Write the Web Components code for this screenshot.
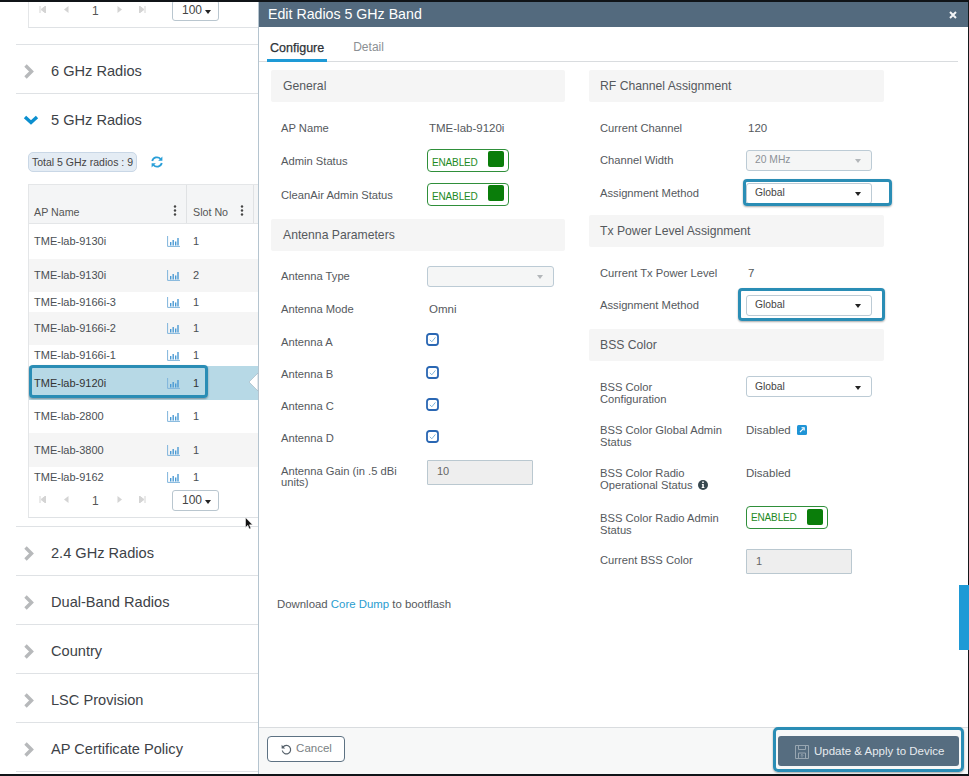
<!DOCTYPE html>
<html lang="en"><head><meta charset="utf-8"><title>Edit Radios 5 GHz Band</title>
<style>
html,body{margin:0;padding:0;height:776px;overflow:hidden;background:#fff}
body{font:12px/1.15 "Liberation Sans",Arial,sans-serif;color:#4a4f54}
</style></head><body>
<x-app>
  <x-sidebar slot="side">
    <x-table-card top><x-pager></x-pager></x-table-card>
    <x-acc-row line first>6 GHz Radios</x-acc-row>
    <x-acc-row open>5 GHz Radios</x-acc-row>
    <x-total>Total 5 GHz radios : 9</x-total>
    <x-table-card>
      <x-thead></x-thead>
      <x-row h="35" slotno="1">TME-lab-9130i</x-row>
      <x-row h="33" slotno="2" alt>TME-lab-9130i</x-row>
      <x-row h="20" slotno="1">TME-lab-9166i-3</x-row>
      <x-row h="33" slotno="1" alt>TME-lab-9166i-2</x-row>
      <x-row h="21" slotno="1">TME-lab-9166i-1</x-row>
      <x-row h="34" slotno="1" selected>TME-lab-9120i</x-row>
      <x-row h="33" slotno="1">TME-lab-2800</x-row>
      <x-row h="34" slotno="1" alt>TME-lab-3800</x-row>
      <x-row h="21" slotno="1">TME-lab-9162</x-row>
      <x-pager></x-pager>
    </x-table-card>
    <x-acc-row line first>2.4 GHz Radios</x-acc-row>
    <x-acc-row line>Dual-Band Radios</x-acc-row>
    <x-acc-row line>Country</x-acc-row>
    <x-acc-row line>LSC Provision</x-acc-row>
    <x-acc-row line>AP Certificate Policy</x-acc-row>
  </x-sidebar>
  <x-panel slot="main" heading="Edit Radios 5 GHz Band">
    <x-col slot="c1">
      <x-section>General</x-section>
      <x-field h="32" mt="10">AP Name<x-val slot="value" pad>TME-lab-9120i</x-val></x-field>
      <x-field h="33">Admin Status<x-toggle slot="value"></x-toggle></x-field>
      <x-field h="35">CleanAir Admin Status<x-toggle slot="value"></x-toggle></x-field>
      <x-section mt="7">Antenna Parameters</x-section>
      <x-field h="32" mt="9">Antenna Type<x-select slot="value" disabled w="127"></x-select></x-field>
      <x-field h="32" mt="1">Antenna Mode<x-val slot="value" pad>Omni</x-val></x-field>
      <x-field h="33">Antenna A<x-check slot="value"></x-check></x-field>
      <x-field h="32">Antenna B<x-check slot="value"></x-check></x-field>
      <x-field h="32">Antenna C<x-check slot="value"></x-check></x-field>
      <x-field h="32">Antenna D<x-check slot="value"></x-check></x-field>
      <x-field h="36" lt="10">Antenna Gain (in .5 dBi<br>units)<x-input slot="value" w="106">10</x-input></x-field>
      <x-download>Download <a>Core Dump</a> to bootflash</x-download>
    </x-col>
    <x-col slot="c2" pad="11">
      <x-section>RF Channel Assignment</x-section>
      <x-field h="32" mt="10">Current Channel<x-val slot="value" pad>120</x-val></x-field>
      <x-field h="32">Channel Width<x-select slot="value" disabled>20 MHz</x-select></x-field>
      <x-field h="34">Assignment Method<x-ring slot="value" style="--t:-4px;--r:-20px;--b:-2px;--l:-3px"><x-select>Global</x-select></x-ring></x-field>
      <x-section mt="5">Tx Power Level Assignment</x-section>
      <x-field h="32" mt="10">Current Tx Power Level<x-val slot="value" pad>7</x-val></x-field>
      <x-field h="32">Assignment Method<x-ring slot="value" style="--t:-7px;--r:-13px;--b:-5px;--l:-8px"><x-select>Global</x-select></x-ring></x-field>
      <x-section mt="8">BSS Color</x-section>
      <x-field h="40" mt="11" top="4" lt="6">BSS Color<br>Configuration<x-select slot="value">Global</x-select></x-field>
      <x-field h="46" top="12" lt="1">BSS Color Global Admin<br>Status<x-val slot="value">Disabled <x-ico-link></x-ico-link></x-val></x-field>
      <x-field h="43" top="9" lt="1">BSS Color Radio<br>Operational Status <x-ico-info></x-ico-info><x-val slot="value">Disabled</x-val></x-field>
      <x-field h="44" top="6" lt="6">BSS Color Radio Admin<br>Status<x-toggle slot="value" mid></x-toggle></x-field>
      <x-field h="33" lt="-2">Current BSS Color<x-input slot="value" w="106">1</x-input></x-field>
    </x-col>
  </x-panel>
</x-app>
<script>
function def(name, css, html, setup){
  customElements.define(name, class extends HTMLElement{
    connectedCallback(){
      if(this.shadowRoot) return;
      const r=this.attachShadow({mode:'open'});
      r.innerHTML='<style>'+css+'</style>'+(typeof html==='function'?html(this):html);
      if(setup) setup(this,r);
    }
  });
}
const A=(el,n)=>el.getAttribute(n);
def('x-app',`:host{display:grid;grid-template-columns:258px 711px;height:776px;box-sizing:border-box;border-top:2px solid #101418;border-bottom:2px solid #101418;position:relative}
 .thumb{position:absolute;left:959px;top:583px;width:10px;height:65px;background:#1e9ad6}
 .cursor{position:absolute;left:245px;top:515px}`,
 `<slot name="side"></slot><slot name="main"></slot><div class="thumb"></div>
  <svg class="cursor" width="8" height="13" viewBox="0 0 8 13"><path d="M.5.5v10l2.3-2.2 1.5 3.6 1.6-.7-1.5-3.4h3.1z" fill="#111" stroke="#fff" stroke-width=".5"/></svg>`);
def('x-sidebar',`:host{display:block;padding-left:16px;overflow:hidden;height:772px}`,`<slot></slot>`);
def('x-table-card',`:host{display:block;margin-left:12px;border-left:1px solid #e4e6e8;border-bottom:1px solid #dfe2e5;box-sizing:border-box}
 :host([top]){margin-top:-4px;margin-bottom:16px}`,`<slot></slot>`);
def('x-pager',`:host{display:flex;align-items:center;height:29px;box-sizing:border-box;padding-bottom:2px;position:relative;background:#fff;color:#555;font-size:12px}
 svg{position:absolute;top:8px}
 .n{position:absolute;left:63px}
 .s{position:absolute;left:143px;top:2px;width:47px;height:21px;box-sizing:border-box;border:1px solid #b9c6cf;border-radius:3px;display:flex;align-items:center;padding-left:9px;gap:3px;background:#fff;color:#444}
 i{width:0;height:0;border:3.5px solid transparent;border-top:4.5px solid #222;border-bottom:0;margin-top:2px}`,
 `<svg style="left:10px" width="7" height="7" viewBox="0 0 7 7"><path d="M1 0v7M6.5 0v7L2 3.5z" stroke="#d4d4d4" fill="#d4d4d4"/></svg>
  <svg style="left:34px" width="6" height="7" viewBox="0 0 6 7"><path d="M5.5 0v7L1 3.5z" fill="#d4d4d4"/></svg>
  <span class="n">1</span>
  <svg style="left:88px" width="6" height="7" viewBox="0 0 6 7"><path d="M.5 0v7L5 3.5z" fill="#d4d4d4"/></svg>
  <svg style="left:110px" width="7" height="7" viewBox="0 0 7 7"><path d="M6 0v7M.5 0v7L5 3.5z" stroke="#d4d4d4" fill="#d4d4d4"/></svg>
  <div class="s">100 <i></i></div>`);
def('x-acc-row',`:host{display:flex;align-items:center;height:49px;box-sizing:border-box;font-size:14.6px;color:#3d4247;padding:4px 0 0 7px}
 :host([line]){border-bottom:1.5px solid #dfe2e5}
 :host([first]){margin-top:8px;border-top:1.5px solid #dfe2e5;height:50px}
 :host([open]){height:48px}
 .c{width:28px;display:flex}`,
 el=>`<span class="c">${el.hasAttribute('open')
   ?'<svg width="16" height="10" viewBox="0 0 16 10"><path d="M2 2l6 5.5L14 2" fill="none" stroke="#0b8fcf" stroke-width="3.4"/></svg>'
   :'<svg width="11" height="15" viewBox="0 0 11 15"><path d="M2.5 1.5l6 6-6 6" fill="none" stroke="#b7b9bb" stroke-width="3.4"/></svg>'}</span><slot></slot>`);
def('x-total',`:host{display:flex;align-items:center;margin:10px 0 12px 12px;gap:14px}
 b{font-weight:400;display:block;height:20px;line-height:18px;box-sizing:border-box;width:109px;text-align:center;background:#e4ecf4;border:1px solid #c9d7e6;border-radius:5px;font-size:10.5px;color:#444}
 svg{display:block}`,
 `<b><slot></slot></b><svg width="12" height="12" viewBox="0 0 12 12"><path d="M1.2 5A4.9 4.9 0 0 1 9.6 3" fill="none" stroke="#2a9fd8" stroke-width="1.8"/><path d="M11.4 .5v4.2H7.2z" fill="#2a9fd8"/><path d="M10.8 7A4.9 4.9 0 0 1 2.4 9" fill="none" stroke="#2a9fd8" stroke-width="1.8"/><path d="M.6 11.5V7.3h4.2z" fill="#2a9fd8"/></svg>`);
const keb=`<svg width="4" height="11" viewBox="0 0 4 11"><g fill="#444"><circle cx="2" cy="1.5" r="1.2"/><circle cx="2" cy="5.5" r="1.2"/><circle cx="2" cy="9.5" r="1.2"/></g></svg>`;
def('x-thead',`:host{display:flex;height:40px;background:#f4f5f6;border-top:1px solid #e4e6e8;border-bottom:1px solid #e4e6e8;box-sizing:border-box;color:#555;font-size:10.7px}
 div{display:flex;align-items:flex-end;justify-content:space-between;padding:0 0 6px 5px;box-sizing:border-box;border-right:1px solid #e0e2e4}
 span{margin-bottom:-1px}
 .a{width:158px;padding-right:9px}.b{width:67px;padding-left:6px;padding-right:9px}
 svg{margin-bottom:1px}`,`<div class="a"><span>AP Name</span>${keb}</div><div class="b"><span>Slot No</span>${keb}</div>`);
def('x-row',`:host{display:flex;align-items:center;position:relative;background:#fff;font-size:11px;color:#4a4f54;padding-left:5px;box-sizing:border-box}
 :host([alt]){background:#f5f5f5}
 :host([selected]){background:#b7d9e6;color:#333}
 :host([selected])::after{content:"";position:absolute;left:0;top:-1px;width:179px;height:33px;box-sizing:border-box;border:3px solid #2a8db5;border-radius:4px;box-shadow:0 1px 2px #0005}
 .n{width:133px}.v{margin-left:13px}
 svg{display:block}
 .notch{position:absolute;right:0;top:7px}`,
 el=>`<span class="n"><slot></slot></span><svg width="13" height="11" viewBox="0 0 13 11"><path d="M.6 0v10.4H13" fill="none" stroke="#7fb4dc" stroke-width="1"/><path d="M3 6h1.4v3.5H3zM5.5 4h1.4v5.5H5.5zM8 5.5h1.4v4H8zM10.3 2h1.4v7.5h-1.4z" fill="#4a9ad4"/></svg><span class="v">${A(el,'slotno')}</span>${el.hasAttribute('selected')?'<svg class="notch" width="10" height="18" viewBox="0 0 10 18"><path d="M10 0L1 9l9 9z" fill="#fff" stroke="#9fb3c0" stroke-width=".6"/></svg>':''}`,
 el=>{el.style.height=A(el,'h')+'px'});
def('x-panel',`:host{display:flex;flex-direction:column;height:772px;border-left:1px solid #b5c4cf;border-right:1px solid #14181c;box-sizing:border-box;background:#fff}
 header{height:25px;flex:none;background:#536a7e;color:#fff;font-size:14.2px;display:flex;align-items:center;justify-content:space-between;padding:0 11px 0 9px}
 header svg{display:block}
 nav{height:35px;flex:none;box-sizing:border-box;border-bottom:1px solid #d9dcdf;margin-right:10px;display:flex;align-items:flex-end;padding-left:8px;gap:26px;font-size:12.5px}
 nav span{display:block;height:27px;box-sizing:border-box;padding-top:6px}
 nav .on{color:#2d3338;border-bottom:3px solid #1e9ad6;margin-bottom:-1px;padding:6px 3px 0;-webkit-text-stroke:.25px #2d3338}
 nav .off{color:#8b9094;font-size:12px;padding-top:7px}
 main{flex:1;display:flex;gap:24px;padding:8px 0 0 12px;min-height:0}
 footer{height:47px;flex:none;box-sizing:border-box;border-top:1px solid #d9dcdf;background:#f7f8f8;display:flex;justify-content:space-between;align-items:flex-start;padding:8px 9px 0 8px}
 button{font:inherit;font-size:11.5px}
 .cancel{width:78px;height:26px;background:#fff;border:1px solid #5d7283;border-radius:4px;color:#7a7f84;display:flex;align-items:center;justify-content:center;gap:4px;padding:0 0 0 1px}
 .ring{position:relative;display:block}
 .ring::after{content:"";position:absolute;inset:-9px -5px -6px -5px;border:3px solid #2a8db5;border-radius:5px;box-shadow:0 1px 2px #0005}
 .upd{width:181px;height:30px;background:#566d80;border:0;border-radius:3px;color:#e6ebef;display:flex;align-items:center;gap:5px;padding:1px 0 0 17px}`,
 el=>`<header><span>${A(el,'heading')}</span><svg width="8" height="8" viewBox="0 0 8 8"><path d="M1 1l6 6M7 1L1 7" stroke="#f2f4f6" stroke-width="2"/></svg></header>
 <nav><span class="on">Configure</span><span class="off">Detail</span></nav>
 <main><slot name="c1"></slot><slot name="c2"></slot></main>
 <footer><button class="cancel"><svg width="11" height="11" viewBox="0 0 11 11"><path d="M2 3.2A4.2 4.2 0 1 1 1.3 6.5" fill="none" stroke="#55606a" stroke-width="1.2"/><path d="M.6 .8v3.6h3.6z" fill="#55606a"/></svg>Cancel</button>
 <span class="ring"><button class="upd"><svg width="14" height="14" viewBox="0 0 14 14" fill="none" stroke="#98a6b1"><path d="M.5.5h13v13H.5zM3.5.5v4h7v-4M3.5 13.5V8h7v5.5"/><path d="M7 12.5V9.5M5.7 10.6 7 9.3l1.3 1.3" stroke-width=".8"/></svg>Update &amp; Apply to Device</button></span></footer>`);
def('x-col',`:host{display:block;width:294px;flex:none;box-sizing:border-box;--pad:10px;--sp:12px}
 :host([pad]){--pad:11px;--sp:11px;width:295px}`,`<slot></slot>`);
def('x-section',`:host{display:flex;align-items:center;height:32px;box-sizing:border-box;background:#f5f5f5;border-radius:2px;padding-left:var(--sp);font-size:12.2px;color:#55595d}`,`<slot></slot>`,
 el=>{if(A(el,'mt'))el.style.marginTop=A(el,'mt')+'px'});
def('x-field',`:host{display:flex;align-items:center;box-sizing:border-box;padding-left:var(--pad);color:#55595d;line-height:11.5px}
 :host([top]){align-items:flex-start}
 .l{width:146px;flex:none;font-size:11.2px;margin-top:var(--lt,2px)}`,`<div class="l"><slot></slot></div><slot name="value"></slot>`,
 el=>{el.style.height=A(el,'h')+'px'; if(A(el,'mt'))el.style.marginTop=A(el,'mt')+'px'; if(A(el,'top'))el.style.paddingTop=A(el,'top')+'px'; if(A(el,'lt')!==null)el.style.setProperty('--lt',A(el,'lt')+'px');});
def('x-val',`:host{display:block;font-size:11.5px;color:#55595d;white-space:nowrap;margin-top:1px}
 :host([pad]){padding-left:2px}`,`<slot></slot>`);
def('x-toggle',`:host{display:flex;align-items:center;justify-content:space-between;width:82px;height:23px;box-sizing:border-box;border:1px solid #2f8f3a;border-radius:4px;padding:0 3px 0 4px;margin-top:-1px}
 span{font-size:10px;letter-spacing:-.15px;color:#1d8a1d;padding-top:5px}
 :host([mid]) span{padding-top:0}
 i{display:block;width:16px;height:16px;background:#0a7d0a;border-radius:2px;margin-top:-2px;margin-right:1px}`,`<span>ENABLED</span><i></i>`);
def('x-select',`:host{display:flex;align-items:center;justify-content:space-between;width:126px;height:21px;box-sizing:border-box;border:1px solid #bccbd5;border-radius:3px;background:#fff;padding:0 10px 0 8px;font-size:10.3px;color:#444}
 :host([disabled]){background:#f5f6f6;color:#8c9196}
 i{width:0;height:0;border:3px solid transparent;border-top:4px solid #222;border-bottom:0;margin-top:2px}
 :host([disabled]) i{border-top-color:#b3b7ba}`,`<span><slot></slot></span><i></i>`,
 el=>{if(A(el,'w'))el.style.width=A(el,'w')+'px'});
def('x-ring',`:host{display:block;position:relative}
 :host::after{content:"";position:absolute;top:var(--t);right:var(--r);bottom:var(--b);left:var(--l);border:3px solid #2a8db5;border-radius:4px;box-shadow:0 1px 2px #0005;pointer-events:none}`,`<slot></slot>`);
def('x-check',`:host{display:block;width:13px;height:13px;margin:0 0 4px -1px}
 svg{display:block}`,`<svg width="13" height="13" viewBox="0 0 13 13"><rect x="1" y="1" width="11" height="11" rx="2.5" fill="#fff" stroke="#2a67b3" stroke-width="1.8"/><path d="M3.8 6.8l2 2 3.6-4.4" fill="none" stroke="#7fb6dd" stroke-width="1"/></svg>`);
def('x-input',`:host{display:flex;align-items:center;height:25px;box-sizing:border-box;background:#eee;border:1px solid #bac8d0;border-radius:1px;padding-left:9px;font-size:11px;color:#666}`,`<slot></slot>`,
 el=>{el.style.width=A(el,'w')+'px'});
def('x-ico-link',`:host{display:inline-block;vertical-align:-1px;margin-left:3px}svg{display:block}`,`<svg width="10" height="10" viewBox="0 0 10 10"><rect width="10" height="10" rx="1.5" fill="#1f94d6"/><path d="M3 7l3.4-3.4M4.5 2.8h2.7v2.7" stroke="#fff" fill="none" stroke-width="1.1"/></svg>`);
def('x-ico-info',`:host{display:inline-block;vertical-align:-1px;margin-left:2px}svg{display:block}`,`<svg width="10" height="10" viewBox="0 0 10 10"><circle cx="5" cy="5" r="5" fill="#37474f"/><path d="M4.2 1.6h1.6v1.5H4.2zM3.9 4h1.9v3.1h.6v1H3.7v-1h.6V5h-.4z" fill="#fff"/></svg>`);
def('x-download',`:host{display:block;margin:108px 0 0 6px;font-size:11.4px;color:#55595d}
 ::slotted(a){color:#2a9dcf}`,`<slot></slot>`);
</script>
</body></html>
